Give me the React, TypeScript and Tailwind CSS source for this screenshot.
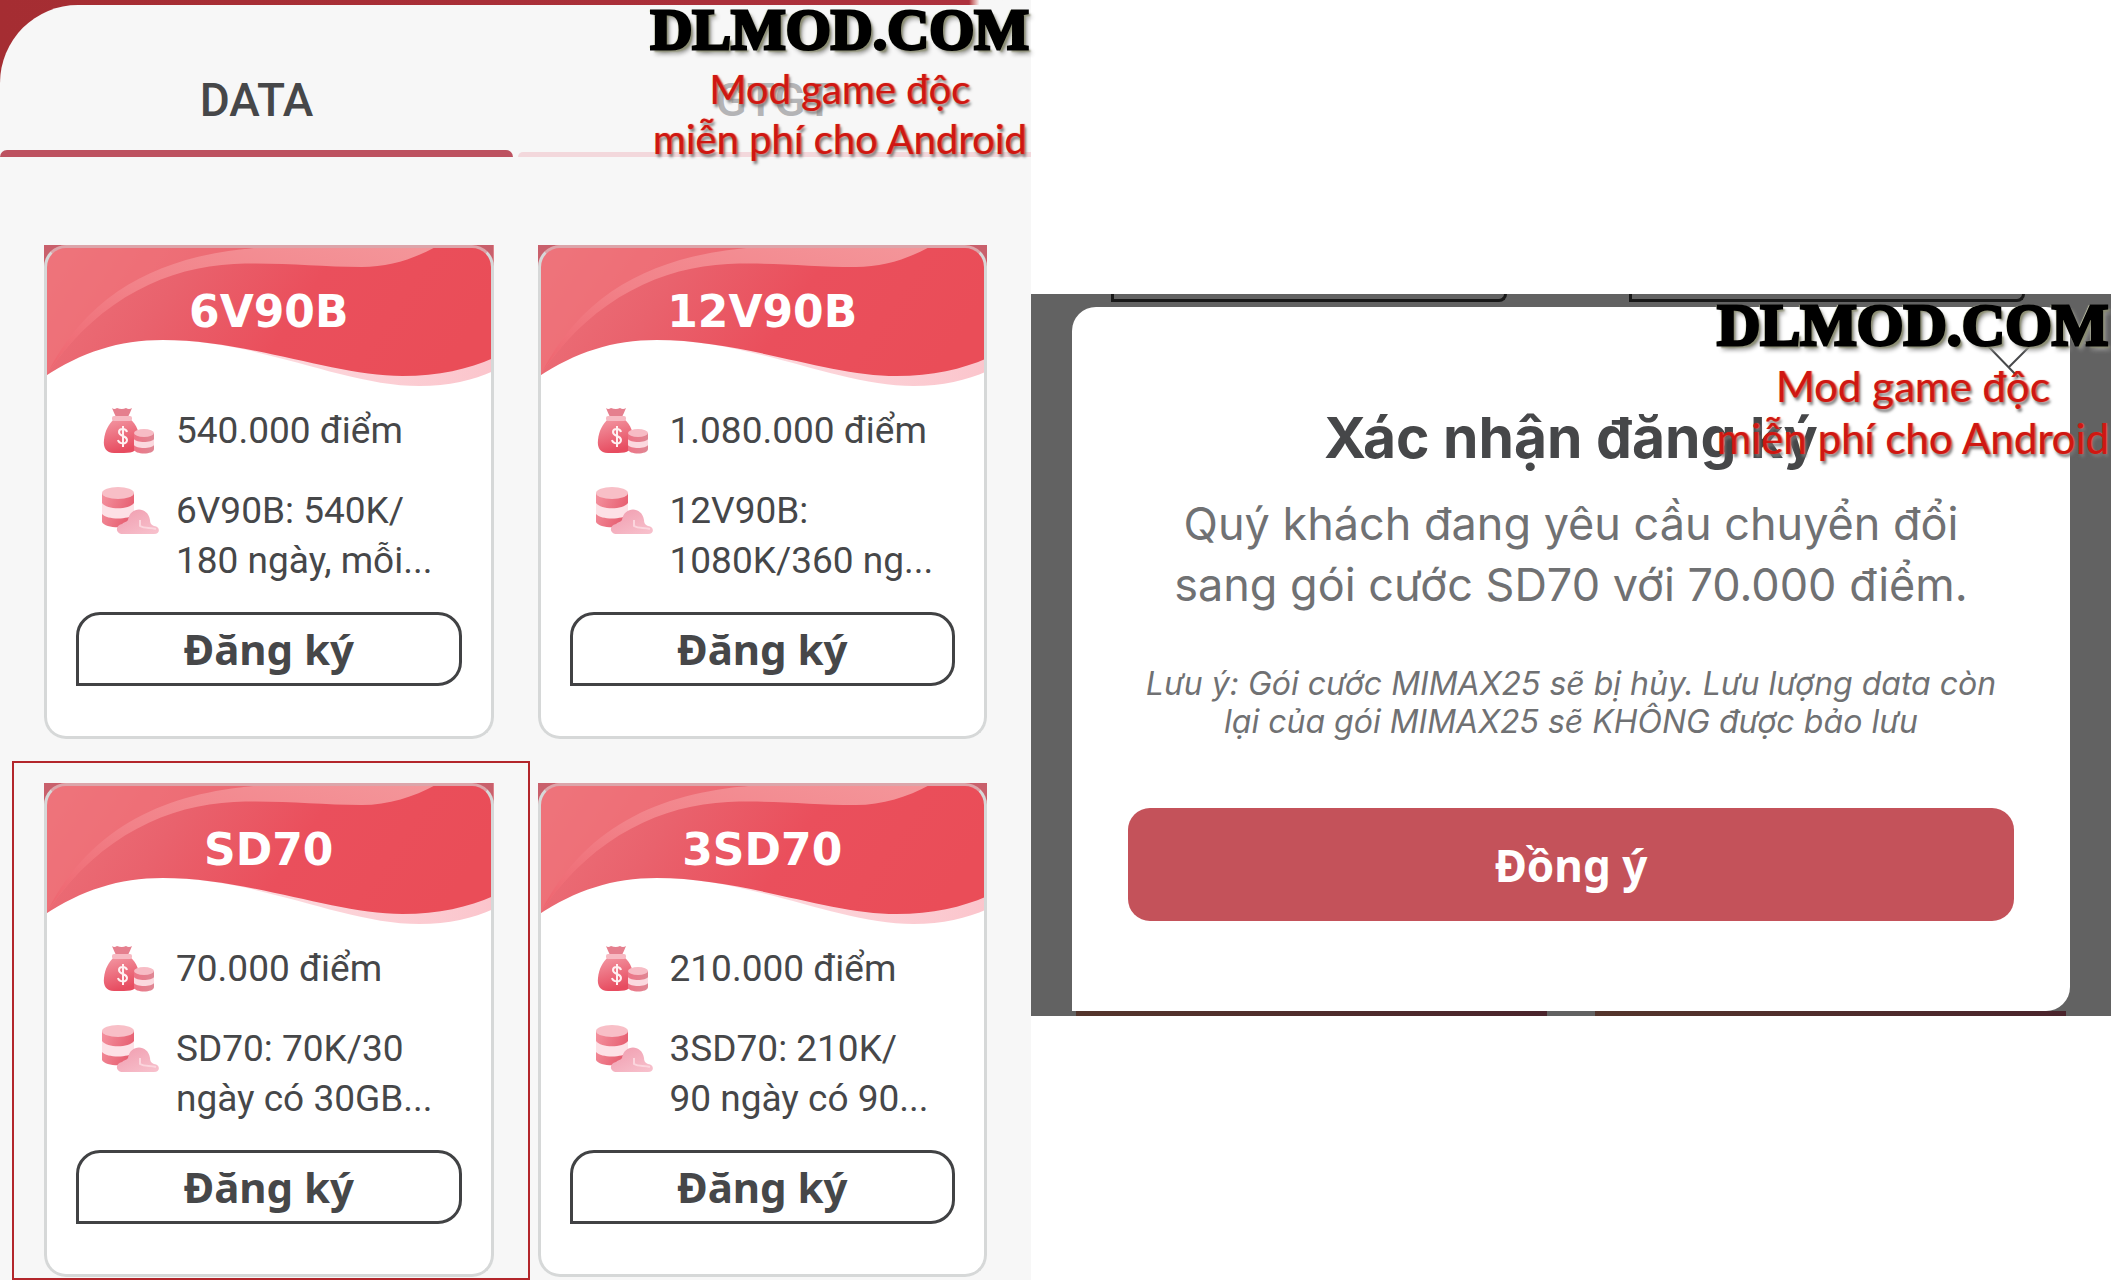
import { useId, useState } from 'react';

interface Plan {
  name: string;
  points: string;
  description: string[];
  highlighted?: boolean;
}

const plans: Plan[] = [
  { name: '6V90B', points: '540.000 điểm', description: ['6V90B: 540K/', '180 ngày, mỗi...'] },
  { name: '12V90B', points: '1.080.000 điểm', description: ['12V90B:', '1080K/360 ng...'] },
  { name: 'SD70', points: '70.000 điểm', description: ['SD70: 70K/30', 'ngày có 30GB...'], highlighted: true },
  { name: '3SD70', points: '210.000 điểm', description: ['3SD70: 210K/', '90 ngày có 90...'] },
];

function CardWave() {
  const id = useId();
  return (
    <svg className="block h-[142px] w-full" viewBox="0 0 450 142" preserveAspectRatio="none" aria-hidden="true">
      <defs>
        <linearGradient id={`${id}base`} x1="0" y1="0.2" x2="1" y2="0.4">
          <stop offset="0" stopColor="#ec727a" />
          <stop offset="0.3" stopColor="#e9626d" />
          <stop offset="0.6" stopColor="#ea4f5c" />
          <stop offset="1" stopColor="#ea4d58" />
        </linearGradient>
        <linearGradient id={`${id}shine`} x1="0" y1="1" x2="1" y2="0">
          <stop offset="0" stopColor="#ee646e" />
          <stop offset="0.45" stopColor="#f28289" />
          <stop offset="1" stopColor="#f4969a" />
        </linearGradient>
        <linearGradient id={`${id}edge`} x1="0" y1="0" x2="1" y2="0">
          <stop offset="0" stopColor="#fde3e6" />
          <stop offset="1" stopColor="#fbc5cc" />
        </linearGradient>
      </defs>
      <path
        d="M119 95 C215 95 300 141 376 141 C405 141 430 135 450 126 V105 L359 125 C290 125 205 90 119 90 Z"
        fill={`url(#${id}edge)`}
      />
      <path
        d="M0 0 H450 V113 C425 124 395 131 359 131 C290 131 205 95 119 95 C75 95 38 107 0 132 Z"
        fill={`url(#${id}base)`}
      />
      <path d="M0 0 H235 C150 5 60 45 4 128 L0 131 Z" fill="#f0757c" opacity="0.6" />
      <path
        d="M4 127 C50 38 130 8 222 2 H392 C370 14 345 22 318 22 C275 22 235 17 190 19 C125 22 58 52 6 124 Z"
        fill={`url(#${id}shine)`}
      />
      <path d="M0 0 H20 C8 3 2 9 0 22 Z M450 0 H430 C442 3 448 9 450 22 Z" fill="#c9606c" />
    </svg>
  );
}

function MoneyBagIcon() {
  const id = useId();
  return (
    <svg className="h-[50px] w-[60px] shrink-0" viewBox="0 0 60 50" aria-hidden="true">
      <defs>
        <linearGradient id={`${id}bag`} x1="0" y1="0" x2="0.3" y2="1">
          <stop offset="0" stopColor="#f39aa5" />
          <stop offset="1" stopColor="#e74c60" />
        </linearGradient>
        <linearGradient id={`${id}coin`} x1="0" y1="0" x2="1" y2="0">
          <stop offset="0" stopColor="#ee7486" />
          <stop offset="1" stopColor="#df8794" />
        </linearGradient>
      </defs>
      <path d="M12 2 Q14 4 17 2 Q22 4 26 2 Q29 4 32 2 Q30 7 28 11 H16 Q14 7 12 2 Z" fill="#e57f8e" />
      <path d="M14 13 H30 C37 19 40 27 39 36 C38 44 34 47 24 47 H14 C6 47 3 41 4 34 C5 24 9 18 14 13 Z" fill={`url(#${id}bag)`} />
      <rect x="12" y="10" width="20" height="5" rx="2" fill="#f7bac3" />
      <path
        d="M27 26 C26 22 19 22 19 26 C19 31 27 29 27 34 C27 39 19 38 18 34 M23 20 V41"
        fill="none"
        stroke="#fff1f2"
        strokeWidth="2"
      />
      <path d="M34 27 V43 C34 49 54 49 54 43 V27 Z" fill={`url(#${id}coin)`} />
      <path d="M34 33 C36 37 52 37 54 33 V39 C52 43 36 43 34 39 Z" fill="#fbd9df" />
      <ellipse cx="44" cy="27" rx="10" ry="4" fill="#f7bcc5" />
    </svg>
  );
}

function DataCloudIcon() {
  const id = useId();
  return (
    <svg className="h-[50px] w-[60px] shrink-0" viewBox="0 0 60 50" aria-hidden="true">
      <defs>
        <linearGradient id={`${id}disk`} x1="0" y1="0" x2="1" y2="0.4">
          <stop offset="0" stopColor="#f4929f" />
          <stop offset="1" stopColor="#e65e70" />
        </linearGradient>
        <linearGradient id={`${id}cloud`} x1="0" y1="0" x2="0.8" y2="1">
          <stop offset="0" stopColor="#f09cae" />
          <stop offset="1" stopColor="#f7bfcb" />
        </linearGradient>
      </defs>
      <path d="M2 7 V36 C5 43 31 43 34 36 V7 Z" fill={`url(#${id}disk)`} />
      <path d="M2 17 C7 24 29 24 34 17 V28 C29 34 7 34 2 28 Z" fill="#fde1e6" />
      <ellipse cx="18" cy="7" rx="16" ry="6" fill="#f8bfc7" />
      <path
        d="M23 48 C15 48 15 39 22 38 C24 36 27 36 28 34 C30 20 48 20 50 34 C50 37 51 39 54 40 C61 41 60 48 54 48 Z"
        fill={`url(#${id}cloud)`}
      />
      <path d="M40 34 V40 C45 43 50 41 56 43" fill="none" stroke="#fbd5dd" strokeWidth="2" />
    </svg>
  );
}

function PlanCard({ plan }: { plan: Plan }) {
  return (
    <article className="relative rounded-b-[22px] bg-white">
      <CardWave />
      <div className="pointer-events-none absolute inset-0 rounded-[22px] border-[3px] border-t-[#dca5aa] border-r-[#d6d8d8] border-b-[#d6d8d8] border-l-[#d6d8d8]" />
      <h2 className="absolute inset-x-0 top-10 text-center font-['DejaVu_Sans',sans-serif] text-[44px] leading-[54px] font-bold text-white">
        {plan.name}
      </h2>

      <div className="px-8 pb-[53px] font-[Roboto,sans-serif] text-[37px] leading-[50px] text-[#464749]">
        <div className="mt-[19px] flex gap-4 pl-6">
          <MoneyBagIcon />
          <p className="whitespace-nowrap">{plan.points}</p>
        </div>
        <div className="mt-[30px] flex gap-4 pl-6">
          <DataCloudIcon />
          <p className="whitespace-nowrap">
            {plan.description[0]}
            <br />
            {plan.description[1]}
          </p>
        </div>
        <button
          type="button"
          className="mt-[26px] block h-[74px] w-full rounded-[24px] rounded-bl-none border-[3px] border-[#414244] font-['Noto_Sans',sans-serif] text-[42px] leading-[60px] font-bold"
        >
          Đăng ký
        </button>
      </div>

      {plan.highlighted && (
        <div className="pointer-events-none absolute -top-[22px] -right-9 -bottom-[3px] -left-8 border-2 border-[#b3262b]" />
      )}
    </article>
  );
}

function Watermark({ large = false }: { large?: boolean }) {
  return (
    <div className="pointer-events-none absolute top-0 right-0 z-10 pr-0.5 text-center whitespace-nowrap">
      <div
        className={`font-['Liberation_Serif',serif] font-bold text-black [-webkit-text-stroke:3px_#000] [text-shadow:3px_3px_2px_#8b8d72,-2px_-1px_1px_#d5d8b8,4px_5px_4px_#999] ${
          large ? 'text-[60px] leading-[62px]' : 'text-[58px] leading-[60px]'
        }`}
      >
        DLMOD.COM
      </div>
      <div
        className={`mt-1 font-[Lato,sans-serif] text-[#cf1712] [text-shadow:1px_0_1px_#f25545,2px_3px_3px_#777] ${
          large ? 'text-[42px] leading-[52px]' : 'text-[40px] leading-[50px]'
        }`}
      >
        Mod game độc
        <br />
        miễn phí cho Android
      </div>
    </div>
  );
}

function ConfirmDialog() {
  return (
    <section className="relative overflow-hidden bg-[#626262] pt-[13px] pr-[41px] pl-[41px]">
      {/* page behind the overlay */}
      <div className="absolute top-0 right-[86px] left-20 flex gap-[122px]">
        <div className="h-2 flex-1 rounded-br-[16px] border-r-[3px] border-b-[3px] border-l-[3px] border-[#181818]" />
        <div className="h-2 flex-1 rounded-br-[16px] border-r-[3px] border-b-[3px] border-l-[3px] border-[#181818]" />
      </div>

      <div
        role="dialog"
        aria-labelledby="confirm-title"
        className="relative rounded-[24px] rounded-bl-none bg-white px-14 pt-[99px] pb-[90px] text-center font-[Inter,sans-serif]"
      >
        <button type="button" aria-label="Đóng" className="absolute top-9 right-9">
          <svg className="h-12 w-12" viewBox="0 0 48 48" fill="none" stroke="#48494b" strokeWidth="2" aria-hidden="true">
            <path d="M2 3 L32 34 M44 3 L22 25" />
          </svg>
        </button>
        <h2 id="confirm-title" className="text-[57px] leading-[64px] font-bold text-[#464749]">
          Xác nhận đăng ký
        </h2>
        <p className="mt-[23px] text-[45px] leading-[61px] text-[#707173]">
          Quý khách đang yêu cầu chuyển đổi
          <br />
          sang gói cước SD70 với 70.000 điểm.
        </p>
        <p className="mt-[50px] text-[32px] leading-[38px] text-[#707173] italic">
          Lưu ý: Gói cước MIMAX25 sẽ bị hủy. Lưu lượng data còn
          <br />
          lại của gói MIMAX25 sẽ KHÔNG được bảo lưu
        </p>
        <button
          type="button"
          className="mt-[67px] block h-[113px] w-full rounded-[22px] bg-[#c4525a] font-['Noto_Sans',sans-serif] text-[44px] font-bold text-white"
        >
          Đồng ý
        </button>
      </div>

      <div className="flex h-[5px] gap-12 px-1">
        <div className="flex-1 bg-linear-to-r from-[#54352c] to-[#4a242c]" />
        <div className="flex-1 bg-linear-to-r from-[#54352c] to-[#4a242c]" />
      </div>
      <Watermark large />
    </section>
  );
}

const tabs = ['DATA', 'GTGT'];

export default function App() {
  const [activeTab, setActiveTab] = useState('DATA');

  return (
    <main className="flex h-screen items-start overflow-hidden bg-white">
      <section className="relative min-h-screen w-[48.84%] shrink-0 bg-[#f7f7f7]">
        <div className="bg-linear-to-r from-[#a52d32] via-[#ad313d] via-94% to-[#f7f7f7] to-95% pt-[5px]">
          <div role="tablist" className="flex gap-[5px] rounded-tl-[78px] bg-[#f7f7f7]">
            {tabs.map((tab) => (
              <button
                key={tab}
                type="button"
                role="tab"
                aria-selected={activeTab === tab}
                onClick={() => setActiveTab(tab)}
                className={`flex flex-1 flex-col font-[Roboto,sans-serif] text-[46px] leading-[60px] font-medium ${
                  activeTab === tab ? 'text-[#464749]' : 'text-[#b4b4b6]'
                }`}
              >
                <span className="w-full pt-[65px] pb-5">{tab}</span>
                {activeTab === tab ? (
                  <span className="h-[7px] w-full rounded-t-[8px] bg-[#bd5260]" />
                ) : (
                  <span className="mt-[2px] h-[5px] w-full rounded-tl-[5px] bg-[#f3d8dc]" />
                )}
              </button>
            ))}
          </div>
        </div>

        <div className="mt-[88px] grid grid-cols-2 gap-11 px-11">
          {plans.map((plan) => (
            <PlanCard key={plan.name} plan={plan} />
          ))}
        </div>
        <Watermark />
      </section>

      <div className="flex-1 pt-[294px]">
        <ConfirmDialog />
      </div>
    </main>
  );
}
